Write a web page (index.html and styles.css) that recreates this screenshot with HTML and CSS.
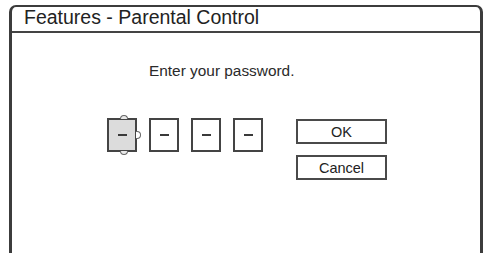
FILE: index.html
```html
<!DOCTYPE html>
<html>
<head>
<meta charset="utf-8">
<link rel="stylesheet" href="styles.css">
</head>
<body>
<div class="frame">
  <div class="header">Features - Parental Control</div>
  <div class="content">
    <div class="prompt">Enter your password.</div>
    <div class="entry">
      <div class="digits">
        <div class="digit active">
          <span class="dash"></span>
          <span class="tab tab-top"></span>
          <span class="tab tab-bottom"></span>
          <span class="tab tab-right"></span>
        </div>
        <div class="digit"><span class="dash"></span></div>
        <div class="digit"><span class="dash"></span></div>
        <div class="digit"><span class="dash"></span></div>
      </div>
      <div class="buttons">
        <div class="btn">OK</div>
        <div class="btn">Cancel</div>
      </div>
    </div>
  </div>
</div>
</body>
</html>
```

FILE: styles.css
```css
html, body {
  margin: 0;
  padding: 0;
  background: #ffffff;
}
body {
  font-family: "Liberation Sans", Arial, sans-serif;
  color: #222;
  overflow: hidden;
  height: 253px;
}
.frame {
  margin: 5px 0 0 9px;
  width: 474px;
  height: 248px;
  box-sizing: border-box;
  border: 3px solid #3c3c3c;
  border-top-width: 2px;
  border-bottom: none;
  border-radius: 7px 7px 0 0;
}
.header {
  height: 26px;
  box-sizing: border-box;
  border-bottom: 2px solid #444;
  padding-left: 12px;
  font-size: 19.5px;
  line-height: 21px;
  color: #222;
  white-space: nowrap;
}
.content {
  display: flex;
  flex-direction: column;
}
.prompt {
  margin-top: 29px;
  padding-left: 137px;
  font-size: 15.4px;
  line-height: 18px;
  color: #2a2a2a;
}
.entry {
  display: flex;
  align-items: flex-start;
  margin-top: 38px;
  margin-left: 95px;
}
.digits {
  display: flex;
  gap: 12px;
}
.digit {
  position: relative;
  width: 30px;
  height: 34px;
  box-sizing: border-box;
  border: 2px solid #444;
  background: #fff;
  display: flex;
  align-items: center;
  justify-content: center;
}
.digit.active {
  background: #dcdcdc;
}
.dash {
  display: block;
  width: 9px;
  height: 2px;
  background: #3a3a3a;
}
.tab {
  position: absolute;
  box-sizing: border-box;
  border: 1px solid #666;
  background: #e8e8e8;
}
.tab-top {
  width: 8px;
  height: 4px;
  left: 11px;
  top: -5px;
  border-radius: 4px 4px 0 0;
  border-bottom: none;
}
.tab-bottom {
  width: 8px;
  height: 4px;
  left: 11px;
  bottom: -5px;
  border-radius: 0 0 4px 4px;
  border-top: none;
}
.tab-right {
  width: 5px;
  height: 8px;
  right: -6px;
  top: 11px;
  border-radius: 0 4px 4px 0;
  border-left: none;
  background: #fff;
}
.buttons {
  display: flex;
  flex-direction: column;
  gap: 11px;
  margin-left: 33px;
  margin-top: 1px;
}
.btn {
  width: 91px;
  height: 25px;
  box-sizing: border-box;
  border: 2px solid #4a4a4a;
  display: flex;
  align-items: center;
  justify-content: center;
  font-size: 14.5px;
  color: #222;
}
```
